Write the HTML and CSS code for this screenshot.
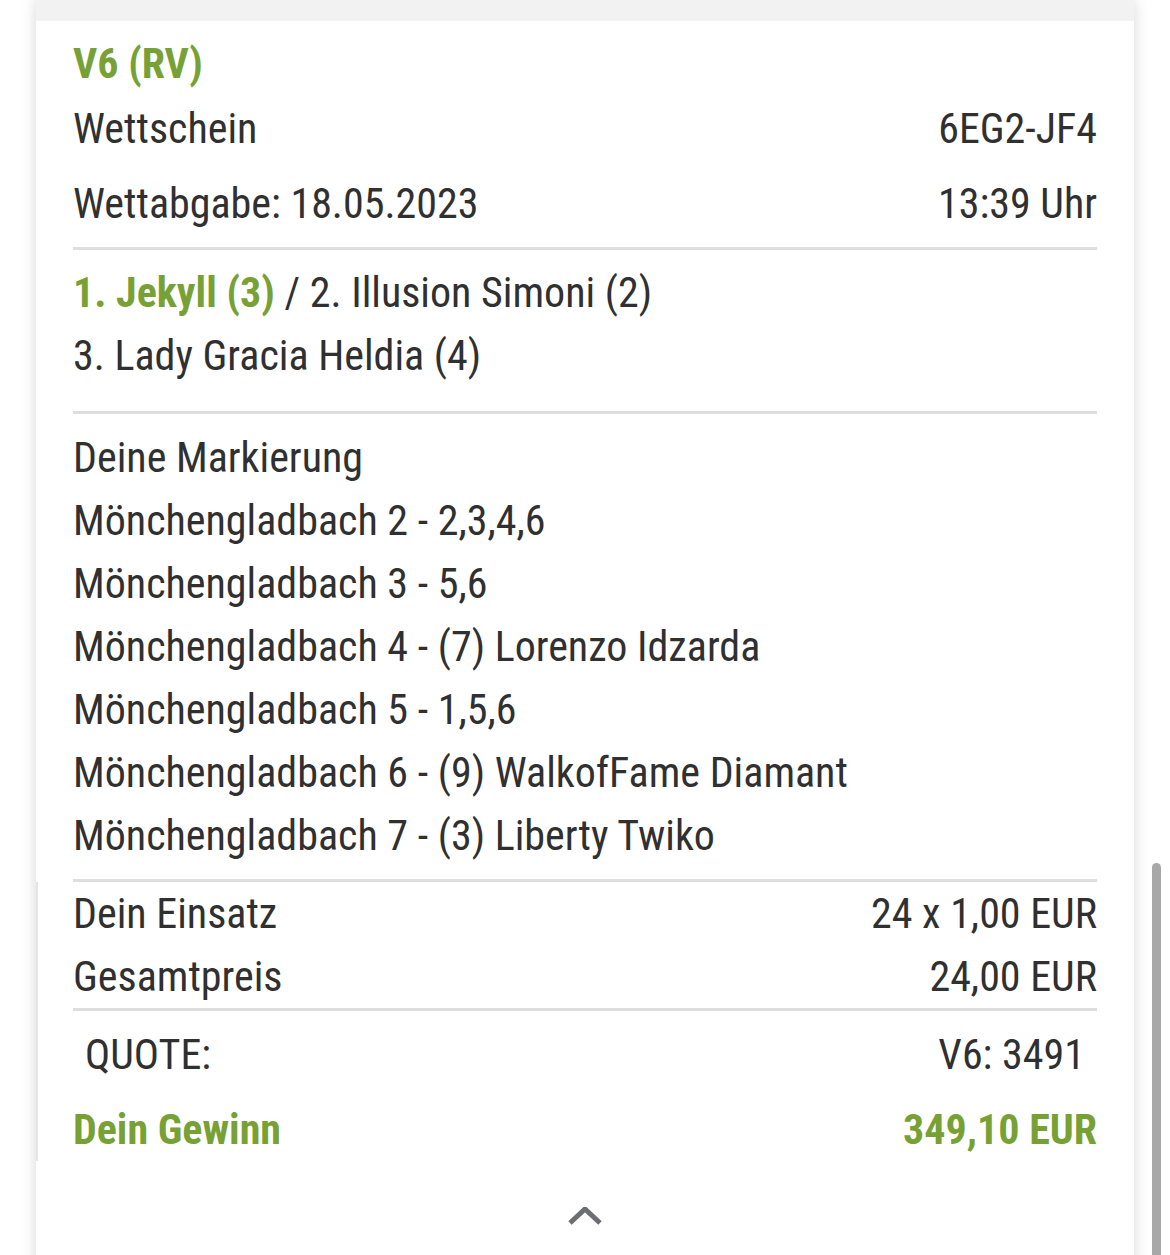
FILE: index.html
```html
<!DOCTYPE html>
<html lang="de">
<head>
  <meta charset="UTF-8">
  <meta name="viewport" content="width=device-width, initial-scale=1.0">
  <title>Wettschein V6</title>
  <link rel="stylesheet" href="styles.css">
</head>
<body>
  <div class="ticket">
    <div class="ticket-top"></div>

    <div class="ticket-body">
      <h1 class="ticket-title">V6 (RV)</h1>

      <div class="ticket-meta">
        <div class="row">
          <span>Wettschein</span>
          <span>6EG2-JF4</span>
        </div>
        <div class="row">
          <span>Wettabgabe: 18.05.2023</span>
          <span>13:39 Uhr</span>
        </div>
      </div>

      <div class="ticket-result">
        <span class="winner">1. Jekyll (3)</span> / 2. Illusion Simoni (2)<br>
        3. Lady Gracia Heldia (4)
      </div>

      <div class="ticket-marks">
        <div>Deine Markierung</div>
        <div>Mönchengladbach 2 - 2,3,4,6</div>
        <div>Mönchengladbach 3 - 5,6</div>
        <div>Mönchengladbach 4 - (7) Lorenzo Idzarda</div>
        <div>Mönchengladbach 5 - 1,5,6</div>
        <div>Mönchengladbach 6 - (9) WalkofFame Diamant</div>
        <div>Mönchengladbach 7 - (3) Liberty Twiko</div>
      </div>

      <div class="ticket-summary">
        <div class="summary-costs">
          <div class="row">
            <span>Dein Einsatz</span>
            <span>24 x 1,00 EUR</span>
          </div>
          <div class="row">
            <span>Gesamtpreis</span>
            <span>24,00 EUR</span>
          </div>
        </div>
        <div class="summary-win">
          <div class="row quote">
            <span>QUOTE:</span>
            <span>V6: 3491</span>
          </div>
          <div class="row gain">
            <span>Dein Gewinn</span>
            <span>349,10 EUR</span>
          </div>
        </div>
      </div>

      <div class="ticket-toggle">
        <svg width="36" height="20" viewBox="0 0 36 20" fill="none" xmlns="http://www.w3.org/2000/svg">
          <path d="M3 16L18 2L33 16" stroke="#6b6e72" stroke-width="5"/>
        </svg>
      </div>
    </div>
  </div>

  <div class="scrollbar"></div>
</body>
</html>
```

FILE: styles.css
```css
body {
  font-family: "Roboto Condensed", Roboto, "Liberation Sans", sans-serif;
  font-stretch: condensed;
  margin: 0;
  padding: 0;
  background-color: #ffffff;
  color: #303030;
  font-size: 42px;
  line-height: 63px;
  overflow: hidden;
  height: 1255px;
}

.ticket {
  margin-left: 36px;
  width: 1098px;
  min-height: 1300px;
  background-color: #ffffff;
  box-shadow: 0 0 14px rgba(0, 0, 0, 0.16);
}

.ticket-top {
  height: 21px;
  background-color: #f2f2f2;
}

.ticket-body {
  padding: 16px 37px 0 37px;
}

.ticket-title {
  font-size: 42px;
  font-weight: 700;
  line-height: 54px;
  color: #77a135;
  margin: 0;
}

.row {
  display: flex;
  justify-content: space-between;
}

.ticket-meta .row {
  padding: 6px 0;
}

.ticket-meta,
.ticket-result,
.ticket-marks,
.summary-costs {
  border-bottom: 3px solid #dedede;
}

.ticket-meta {
  padding-bottom: 6px;
}

.ticket-result {
  padding: 11px 0 24px;
}

.winner {
  color: #77a135;
  font-weight: 700;
}

.ticket-marks {
  padding: 12px 0 12px;
}

.ticket-summary {
  margin-left: -37px;
  padding-left: 35px;
  border-left: 2px solid #e4e4e4;
}

.summary-win {
  padding-top: 12px;
}

.quote {
  padding: 0 12px 12px 12px;
}

.gain {
  color: #77a135;
  font-weight: 700;
}

.ticket-toggle {
  display: flex;
  justify-content: center;
  padding-top: 46px;
}

.scrollbar {
  position: absolute;
  top: 863px;
  left: 1152px;
  width: 9px;
  height: 400px;
  border-radius: 5px;
  background-color: #a8a8a8;
}
```
